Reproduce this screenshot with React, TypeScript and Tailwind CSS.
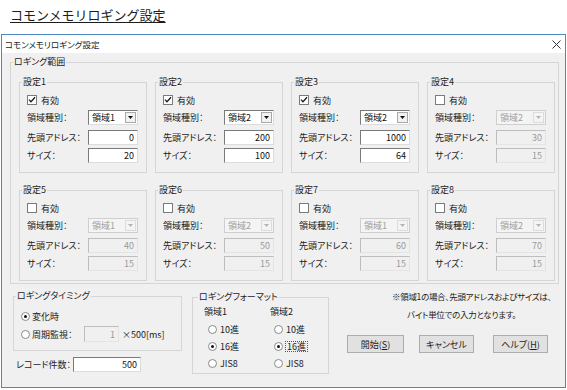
import React from "react";
import clsx from "clsx";

// One logging slot ("設定n") as shown in the dialog
interface Slot {
  no: number;
  on: boolean;
  area: string;
  addr: string;
  size: string;
}

const slots: Slot[] = [
  { no: 1, on: true, area: "領域1", addr: "0", size: "20" },
  { no: 2, on: true, area: "領域2", addr: "200", size: "100" },
  { no: 3, on: true, area: "領域2", addr: "1000", size: "64" },
  { no: 4, on: false, area: "領域2", addr: "30", size: "15" },
  { no: 5, on: false, area: "領域1", addr: "40", size: "15" },
  { no: 6, on: false, area: "領域2", addr: "50", size: "15" },
  { no: 7, on: false, area: "領域1", addr: "60", size: "15" },
  { no: 8, on: false, area: "領域2", addr: "70", size: "15" },
];

const Check = ({ checked }: { checked: boolean }) => (
  <span className="flex h-[10px] w-[10px] items-center justify-center border border-[#7a7a7a] bg-white">
    {checked && (
      <svg width="8" height="8" viewBox="0 0 8 8">
        <path d="M1 3.6 L3 5.8 L7 1.2" fill="none" stroke="#1a1a1a" strokeWidth="1.3" />
      </svg>
    )}
  </span>
);

const Radio = ({ on }: { on: boolean }) => (
  <span className="flex h-[9px] w-[9px] items-center justify-center rounded-full border border-[#8a8a8a] bg-white">
    {on && <span className="h-[3px] w-[3px] rounded-full bg-[#111]" />}
  </span>
);

const Field = ({ value, disabled, w = "w-[50px]", h = "h-[15px]" }: { value: string; disabled?: boolean; w?: string; h?: string }) => (
  <div
    className={clsx(
      "flex items-center justify-end border pr-[3px] text-[9px] leading-none",
      w,
      h,
      disabled
        ? "border-[#bdbdbd] border-b-[#e4e4e4] border-r-[#e4e4e4] bg-[#f0f0f0] text-[#9a9a9a]"
        : "border-[#7a7a7a] border-b-[#dcdcdc] border-r-[#dcdcdc] bg-white text-[#111]"
    )}
  >
    {value}
  </div>
);

const Combo = ({ value, disabled }: { value: string; disabled?: boolean }) => (
  <div
    className={clsx(
      "flex h-[15px] w-[50px] items-center border",
      disabled
        ? "border-[#cfcfcf] bg-[#f4f4f4] text-[#a0a0a0]"
        : "border-[#7a7a7a] border-b-[#dcdcdc] border-r-[#dcdcdc] bg-white text-[#111]"
    )}
  >
    <span className="flex-1 pl-[3px] text-[9px] leading-none">{value}</span>
    <span
      className={clsx(
        "mr-[1px] flex h-[11px] w-[11px] items-center justify-center border",
        disabled ? "border-[#dcdcdc] bg-[#f4f4f4]" : "border-[#a8a8a8] bg-[#f2f2f2]"
      )}
    >
      <svg width="5" height="3" viewBox="0 0 5 3">
        <path d="M0 0 H5 L2.5 3 Z" fill={disabled ? "#b4b4b4" : "#111"} />
      </svg>
    </span>
  </div>
);

const Row = ({ label, className, children }: { label: string; className?: string; children: React.ReactNode }) => (
  <div className={clsx("flex items-center", className)}>
    <span className="w-[61px] text-[9px] leading-none">{label}</span>
    {children}
  </div>
);

const SlotBox = ({ s }: { s: Slot }) => (
  <fieldset className="border border-[#d5d5d5]">
    <legend className="ml-[2px] px-[1px] text-[9px] leading-[12px]">設定{s.no}</legend>
    <div className="px-[7px] pb-[9px]">
      <div className="mt-[5px] flex h-[14px] items-center gap-[4px]">
        <Check checked={s.on} />
        <span className="text-[9px] leading-none">有効</span>
      </div>
      <Row label="領域種別：" className="mt-[3px]">
        <Combo value={s.area} disabled={!s.on} />
      </Row>
      <Row label="先頭アドレス：" className="mt-[5px]">
        <Field value={s.addr} disabled={!s.on} />
      </Row>
      <Row label="サイズ：" className="mt-[3px]">
        <Field value={s.size} disabled={!s.on} />
      </Row>
    </div>
  </fieldset>
);

const Button = ({ children, w, className }: { children: React.ReactNode; w: string; className?: string }) => (
  <div
    className={clsx(
      "flex h-[18px] items-center justify-center border border-[#adadad] bg-[#e1e1e1] text-[9px] leading-none",
      w,
      className
    )}
  >
    {children}
  </div>
);

export default function App() {
  return (
    <div className="h-[390px] w-[567px] bg-white font-['Noto_Sans_CJK_JP','Noto_Sans_CJK_SC',sans-serif] text-[#1c1c1c]">
      <div className="pl-[10px] pt-[6px] text-[13px] leading-[18px] underline underline-offset-[2px]">
        コモンメモリロギング設定
      </div>

      <div className="ml-[1px] mt-[10px] flex h-[354px] w-[565px] flex-col border border-[#4f86bd] [font-feature-settings:'palt']">
        {/* title bar */}
        <div className="flex h-[18px] items-center justify-between bg-white pl-[3px] pr-[4px]">
          <span className="text-[8.5px] leading-none">コモンメモリロギング設定</span>
          <svg width="9" height="9" viewBox="0 0 9 9">
            <path d="M0.5 0.5 L8.5 8.5 M8.5 0.5 L0.5 8.5" stroke="#333" strokeWidth="1" />
          </svg>
        </div>

        <div className="flex-1 bg-[#f0f0f0] pl-[8px] pr-[6px] pt-[3px]">
          <fieldset className="border border-[#d5d5d5]">
            <legend className="ml-[2px] px-[1px] text-[9px] leading-[12px]">ロギング範囲</legend>
            <div className="grid grid-cols-4 gap-x-[8px] gap-y-[11px] pb-[2px] pl-[8px] pr-[3px] pt-[8px]">
              {slots.map((s) => (
                <SlotBox key={s.no} s={s} />
              ))}
            </div>
          </fieldset>

          <div className="flex">
            {/* timing + record count */}
            <div className="ml-[3px] flex w-[169px] flex-col">
              <fieldset className="mt-[6px] border border-[#d5d5d5]">
                <legend className="ml-[2px] px-[1px] text-[9px] leading-[12px]">ロギングタイミング</legend>
                <div className="pb-[8px] pl-[7px] pt-[7px] text-[9px] leading-none">
                  <div className="flex h-[14px] items-center gap-[2px]">
                    <Radio on />
                    <span>変化時</span>
                  </div>
                  <div className="mt-[3px] flex h-[16px] items-center">
                    <Radio on={false} />
                    <span className="ml-[2px] w-[52px]">周期監視：</span>
                    <Field value="1" disabled w="w-[35px]" h="h-[16px]" />
                    <span className="ml-[3px]">×500[ms]</span>
                  </div>
                </div>
              </fieldset>
              <div className="ml-[3px] mt-[6px] flex items-center">
                <span className="w-[57px] text-[9px] leading-none">レコード件数：</span>
                <Field value="500" w="w-[68px]" />
              </div>
            </div>

            {/* format */}
            <fieldset className="ml-[10px] mt-[7px] h-[83px] w-[137px] border border-[#d5d5d5]">
              <legend className="ml-[5px] px-[1px] text-[9px] leading-[12px]">ロギングフォーマット</legend>
              <div className="grid grid-cols-[66px_1fr] pl-[11px] pt-[2px] text-[9px] leading-none">
                {[
                  { a: "領域1", items: ["10進", "16進", "JIS8"], pick: 1 },
                  { a: "領域2", items: ["10進", "16進", "JIS8"], pick: 1 },
                ].map((col, ci) => (
                  <div key={col.a} className="flex flex-col">
                    <div className="flex h-[12px] items-center">{col.a}</div>
                    {col.items.map((it, i) => (
                      <div key={it} className={clsx("flex h-[14px] items-center gap-[3px] pl-[4px]", i === 0 ? "mt-[5px]" : "mt-[3px]")}>
                        <Radio on={i === col.pick} />
                        <span className={clsx(ci === 1 && i === col.pick && "outline outline-1 outline-dotted outline-[#555] px-[1px]")}>{it}</span>
                      </div>
                    ))}
                  </div>
                ))}
              </div>
            </fieldset>

            {/* note + buttons */}
            <div className="ml-[18px] flex flex-1 flex-col">
              <div className="mt-[3px] whitespace-nowrap text-[8.5px] leading-[18px] tracking-[-0.3px]">
                <div className="pl-[45px]">※領域1の場合、先頭アドレスおよびサイズは、</div>
                <div className="pl-[60px]">バイト単位での入力となります。</div>
              </div>
              <div className="mt-[12px] flex">
                <Button w="w-[57px]" className="border-[#8a8a8a]">
                  開始(<span className="underline">S</span>)
                </Button>
                <Button w="w-[55px]" className="ml-[15px]">キャンセル</Button>
                <Button w="w-[55px]" className="ml-[19px]">
                  ヘルプ(<span className="underline">H</span>)
                </Button>
              </div>
            </div>
          </div>
        </div>
      </div>
    </div>
  );
}
